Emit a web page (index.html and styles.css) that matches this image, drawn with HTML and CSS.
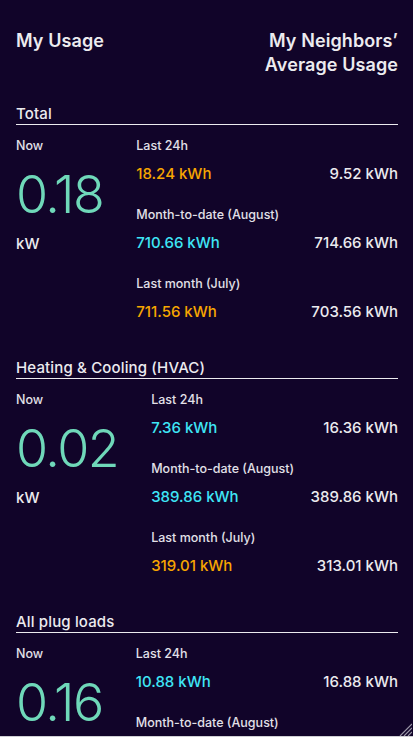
FILE: index.html
```html
<!DOCTYPE html>
<html lang="en">
<head>
<meta charset="utf-8">
<title>Usage</title>
<link rel="stylesheet" href="styles.css">
</head>
<body>
<div class="app">
  <header class="head">
    <h1 class="head-title">My Usage</h1>
    <h1 class="head-title right">My Neighbors’<br>Average Usage</h1>
  </header>

  <section class="section">
    <h2 class="sec-title">Total</h2>
    <div class="sec-body">
      <div class="now">
        <div class="label">Now</div>
        <div class="big">0.18</div>
        <div class="unit">kW</div>
      </div>
      <div class="stats">
        <div class="group">
          <div class="label">Last 24h</div>
          <div class="vals"><span class="v orange">18.24 kWh</span><span class="v">9.52 kWh</span></div>
        </div>
        <div class="group">
          <div class="label">Month-to-date (August)</div>
          <div class="vals"><span class="v cyan">710.66 kWh</span><span class="v">714.66 kWh</span></div>
        </div>
        <div class="group">
          <div class="label">Last month (July)</div>
          <div class="vals"><span class="v orange">711.56 kWh</span><span class="v">703.56 kWh</span></div>
        </div>
      </div>
    </div>
  </section>

  <section class="section">
    <h2 class="sec-title">Heating &amp; Cooling (HVAC)</h2>
    <div class="sec-body">
      <div class="now">
        <div class="label">Now</div>
        <div class="big">0.02</div>
        <div class="unit">kW</div>
      </div>
      <div class="stats">
        <div class="group">
          <div class="label">Last 24h</div>
          <div class="vals"><span class="v cyan">7.36 kWh</span><span class="v">16.36 kWh</span></div>
        </div>
        <div class="group">
          <div class="label">Month-to-date (August)</div>
          <div class="vals"><span class="v cyan">389.86 kWh</span><span class="v">389.86 kWh</span></div>
        </div>
        <div class="group">
          <div class="label">Last month (July)</div>
          <div class="vals"><span class="v orange">319.01 kWh</span><span class="v">313.01 kWh</span></div>
        </div>
      </div>
    </div>
  </section>

  <section class="section">
    <h2 class="sec-title">All plug loads</h2>
    <div class="sec-body">
      <div class="now">
        <div class="label">Now</div>
        <div class="big">0.16</div>
        <div class="unit">kW</div>
      </div>
      <div class="stats">
        <div class="group">
          <div class="label">Last 24h</div>
          <div class="vals"><span class="v cyan">10.88 kWh</span><span class="v">16.88 kWh</span></div>
        </div>
        <div class="group">
          <div class="label">Month-to-date (August)</div>
          <div class="vals"><span class="v cyan">1.23 kWh</span><span class="v">1.23 kWh</span></div>
        </div>
      </div>
    </div>
  </section>
</div>
<svg class="grip" width="13" height="13" viewBox="0 0 13 13">
  <path d="M13 1 L1 13 M13 5 L5 13 M13 9 L9 13" stroke="#9a96a6" stroke-width="1.2"/>
</svg>
<div class="edge"></div>
</body>
</html>
```
FILE: styles.css
```css
html, body {
  margin: 0;
  padding: 0;
  height: 100%;
  overflow: hidden;
  background: #110429;
}
body {
  font-family: Inter, "Noto Sans", "Liberation Sans", sans-serif;
  color: #ecebef;
}
.app {
  padding: 29px 15px 0 16px;
}
.head {
  display: flex;
  justify-content: space-between;
  align-items: flex-start;
}
.head-title {
  margin: 0;
  font-size: 18px;
  line-height: 24px;
  font-weight: 600;
  letter-spacing: 0.1px;
}
.head-title.right {
  text-align: right;
}
.section {
  margin-top: 27px;
}
.section + .section {
  margin-top: 36px;
}
.sec-title {
  margin: 0;
  font-size: 15px;
  line-height: 20px;
  font-weight: 500;
  letter-spacing: 0.15px;
  border-bottom: 1px solid #ecebef;
}
.sec-body {
  display: flex;
  gap: 33px;
  padding-top: 12px;
}
.label {
  font-size: 12.5px;
  line-height: 18px;
  font-weight: 500;
  color: #e2e0e8;
}
.now {
  display: flex;
  flex-direction: column;
}
.big {
  font-size: 52px;
  line-height: 60px;
  font-weight: 300;
  color: #6fd8b9;
  margin-top: 10px;
  letter-spacing: -1.5px;
}
.unit {
  font-size: 15px;
  line-height: 20px;
  margin-top: 9px;
  font-weight: 500;
}
.stats {
  flex: 1;
  display: flex;
  flex-direction: column;
  gap: 22px;
}
.vals {
  display: flex;
  justify-content: space-between;
  margin-top: 9px;
}
.v {
  font-size: 15px;
  line-height: 20px;
  font-weight: 500;
}
.orange { color: #f7a600; }
.cyan { color: #3fe6f6; }
.grip {
  position: fixed;
  right: 1px;
  bottom: 1px;
}
.edge {
  position: fixed;
  left: 0;
  right: 0;
  bottom: 0;
  height: 1px;
  background: #cfcfd4;
}
```
